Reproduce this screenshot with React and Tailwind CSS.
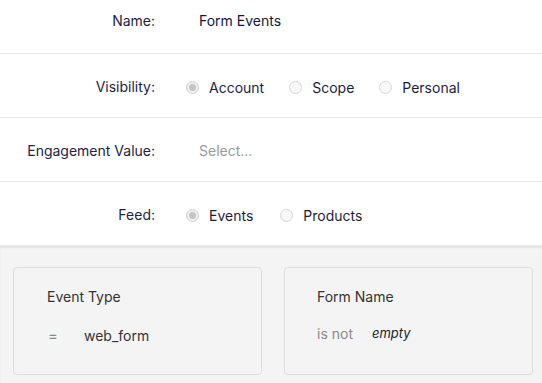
import React from 'react';

const font = { fontFamily: 'Inter, "Noto Sans", sans-serif' };

function Radio({ label, checked }) {
    return (
        <label className="flex items-center gap-[10px]">
            <span
                className={
                    'w-[13px] h-[13px] rounded-full border flex items-center justify-center ' +
                    (checked ? 'border-[#cfcfcf] bg-[#f0f0f0]' : 'border-[#d6d6d6] bg-[#f8f8f8]')
                }
            >
                {checked && <span className="w-[7px] h-[7px] rounded-full bg-[#c4c4c4]" />}
            </span>
            <span className="text-[#1d1d3a]">{label}</span>
        </label>
    );
}

function Row({ label, children, first }) {
    return (
        <div
            className={
                'flex items-center border-b border-[#ebebeb] ' +
                (first ? 'h-[54px] pb-[12px]' : 'h-[64px] pt-[1px]')
            }
        >
            <div className="w-[155px] text-right text-[#23233f] shrink-0">{label}</div>
            <div className="flex items-center">{children}</div>
        </div>
    );
}

export default function App() {
    return (
        <div className="w-[542px] h-[383px] overflow-hidden bg-white text-[14px]" style={font}>
            <Row label="Name:" first>
                <span className="pl-[44px] text-[#16163a]">Form Events</span>
            </Row>
            <Row label="Visibility:">
                <div className="flex items-center gap-[25px] pl-[31px] pt-[2px]">
                    <Radio label="Account" checked />
                    <Radio label="Scope" />
                    <Radio label="Personal" />
                </div>
            </Row>
            <Row label="Engagement Value:">
                <span className="pl-[44px] text-[#9a9a9a]">Select...</span>
            </Row>
            <Row label="Feed:">
                <div className="flex items-center gap-[27px] pl-[31px] pt-[2px]">
                    <Radio label="Events" checked />
                    <Radio label="Products" />
                </div>
            </Row>

            <div className="bg-[#f4f4f4] border-t border-[#e2e2e2] shadow-[inset_0_1px_2px_rgba(0,0,0,0.05)] h-full pt-[20px] pl-[13px]">
                <div className="flex gap-[22px]">
                    <div className="w-[249px] h-[108px] border border-[#dddddd] rounded-[4px] pl-[33px] pt-[18px]">
                        <div className="text-[#333333]">Event Type</div>
                        <div className="flex items-center mt-[16px]">
                            <span className="w-[37px] text-[15px] text-[#8a8a8a] pl-[1px] pt-[2px]">=</span>
                            <span className="text-[#333333]">web_form</span>
                        </div>
                    </div>
                    <div className="w-[249px] h-[108px] border border-[#dddddd] rounded-[4px] pl-[32px] pt-[18px]">
                        <div className="text-[#333333]">Form Name</div>
                        <div className="flex items-center mt-[16px]">
                            <span className="w-[55px] text-[#8a8a8a]">is not</span>
                            <span className="italic text-[13px] text-[#222233]">empty</span>
                        </div>
                    </div>
                </div>
            </div>
        </div>
    );
}
